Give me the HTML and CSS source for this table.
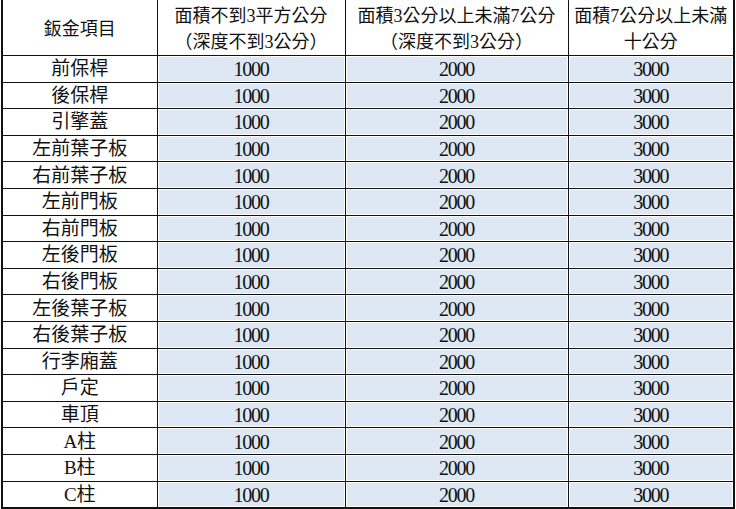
FILE: index.html
```html
<!DOCTYPE html>
<html lang="zh-Hant">
<head>
<meta charset="utf-8">
<link rel="stylesheet" href="styles.css">
</head>
<body>
<table class="price-table">
  <colgroup>
    <col class="c1"><col class="c2"><col class="c3"><col class="c4">
  </colgroup>
  <thead>
    <tr>
      <th>鈑金項目</th>
      <th>面積不到3平方公分<br>（深度不到3公分）</th>
      <th>面積3公分以上未滿7公分<br>（深度不到3公分）</th>
      <th>面積7公分以上未滿<br>十公分</th>
    </tr>
  </thead>
  <tbody>
    <tr><td class="name">前保桿</td><td class="num">1000</td><td class="num">2000</td><td class="num">3000</td></tr>
    <tr><td class="name">後保桿</td><td class="num">1000</td><td class="num">2000</td><td class="num">3000</td></tr>
    <tr><td class="name">引擎蓋</td><td class="num">1000</td><td class="num">2000</td><td class="num">3000</td></tr>
    <tr><td class="name">左前葉子板</td><td class="num">1000</td><td class="num">2000</td><td class="num">3000</td></tr>
    <tr><td class="name">右前葉子板</td><td class="num">1000</td><td class="num">2000</td><td class="num">3000</td></tr>
    <tr><td class="name">左前門板</td><td class="num">1000</td><td class="num">2000</td><td class="num">3000</td></tr>
    <tr><td class="name">右前門板</td><td class="num">1000</td><td class="num">2000</td><td class="num">3000</td></tr>
    <tr><td class="name">左後門板</td><td class="num">1000</td><td class="num">2000</td><td class="num">3000</td></tr>
    <tr><td class="name">右後門板</td><td class="num">1000</td><td class="num">2000</td><td class="num">3000</td></tr>
    <tr><td class="name">左後葉子板</td><td class="num">1000</td><td class="num">2000</td><td class="num">3000</td></tr>
    <tr><td class="name">右後葉子板</td><td class="num">1000</td><td class="num">2000</td><td class="num">3000</td></tr>
    <tr><td class="name">行李廂蓋</td><td class="num">1000</td><td class="num">2000</td><td class="num">3000</td></tr>
    <tr><td class="name">戶定</td><td class="num">1000</td><td class="num">2000</td><td class="num">3000</td></tr>
    <tr><td class="name">車頂</td><td class="num">1000</td><td class="num">2000</td><td class="num">3000</td></tr>
    <tr><td class="name">A柱</td><td class="num">1000</td><td class="num">2000</td><td class="num">3000</td></tr>
    <tr><td class="name">B柱</td><td class="num">1000</td><td class="num">2000</td><td class="num">3000</td></tr>
    <tr><td class="name">C柱</td><td class="num">1000</td><td class="num">2000</td><td class="num">3000</td></tr>
  </tbody>
</table>
</body>
</html>
```
FILE: styles.css
```css
html, body {
  margin: 0;
  padding: 0;
  background: #ffffff;
}
body {
  width: 736px;
  height: 509px;
  overflow: hidden;
}
.price-table {
  border-collapse: collapse;
  table-layout: fixed;
  width: 734px;
  margin-left: 1px;
  border-left: 2px solid #111;
  border-right: 2px solid #111;
  border-bottom: 2px solid #111;
  font-family: "Liberation Serif", "Noto Sans CJK TC", serif;
  color: #111;
}
.c1 { width: 155px; }
.c2 { width: 188px; }
.c3 { width: 223px; }
.c4 { width: 166px; }
.price-table th {
  height: 51px;
  padding: 3px 0 0 0;
  font-family: "Liberation Serif", "Noto Sans CJK TC", sans-serif;
  font-weight: normal;
  font-size: 18px;
  line-height: 26px;
  text-align: center;
  vertical-align: middle;
  border: 1px solid #111;
  border-top: none;
  background: #fff;
}
.price-table td {
  height: 24.6px;
  padding: 1px 0 0 0;
  border: 1px solid #111;
  text-align: center;
  vertical-align: middle;
  line-height: 22px;
  overflow: hidden;
}
.price-table td.name {
  font-size: 19px;
  background: #fff;
}
.price-table td.num {
  font-size: 20px;
  background: #dde8f4;
  box-shadow: inset 0 0 0 1px #fff;
  letter-spacing: -1.3px;
}
```
